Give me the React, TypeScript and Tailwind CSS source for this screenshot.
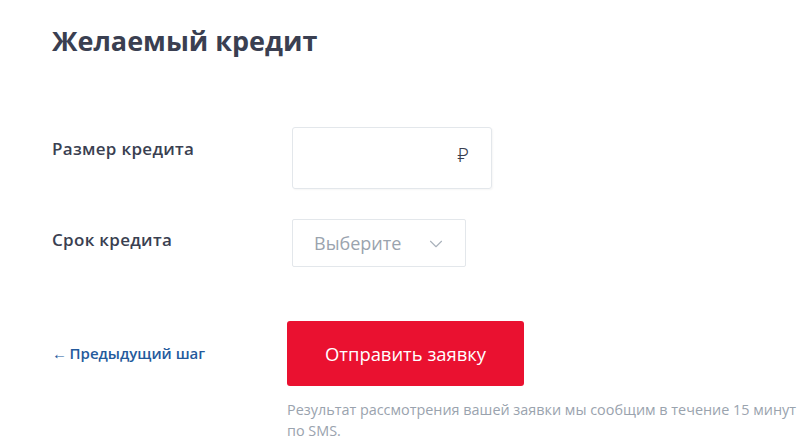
import { ChevronDown } from "lucide-react";

const font = { fontFamily: '"Open Sans", "Noto Sans", sans-serif' };

export default function App() {
  return (
    <main style={font} className="min-h-screen w-full bg-white pl-[52px] pt-[22px] text-[#3a3f51]">
      <h1 className="text-[27px] font-bold leading-[38px]">Желаемый кредит</h1>

      <div className="mt-[67px] grid grid-cols-[240px_auto] items-start gap-y-[30px]">
        <label className="pt-[9px] text-[17px] font-semibold tracking-[0.3px]">Размер кредита</label>
        <div className="flex h-[62px] w-[200px] items-start justify-end rounded-[3px] border border-[#e3e7eb] pr-[22px] pt-[12px] shadow-[1px_1px_2px_rgba(0,0,0,0.04)]">
          <span className="text-[20px] font-light text-[#3a3f51]">₽</span>
        </div>

        <label className="pt-[8px] text-[17px] font-semibold tracking-[0.3px]">Срок кредита</label>
        <div className="flex h-[48px] w-[174px] items-center justify-between rounded-[2px] border border-[#e3e7eb] pl-[21px] pr-[18px]">
          <span className="text-[18px] text-[#9aa3ae]">Выберите</span>
          <ChevronDown className="mt-[2px] size-[22px] text-[#a9b1bb]" strokeWidth={1.2} />
        </div>
      </div>

      <div className="mt-[54px] grid grid-cols-[235px_auto] items-center">
        <a href="#" className="text-[15px] font-semibold text-[#245a9c]">
          ←&thinsp;Предыдущий шаг
        </a>
        <button className="h-[65px] w-[237px] rounded-[3px] bg-[#ea1130] text-[18.4px] text-white">
          Отправить заявку
        </button>
      </div>
      <p className="ml-[235px] mt-[13px] w-[520px] text-[14.4px] leading-[21px] text-[#9aa3ae]">
        Результат рассмотрения вашей заявки мы сообщим в течение 15 минут по SMS.
      </p>
    </main>
  );
}
